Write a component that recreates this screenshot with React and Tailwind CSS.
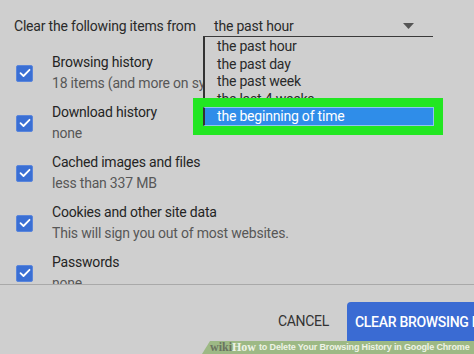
import React from 'react';

const rows = [
  { title: 'Browsing history', sub: '18 items (and more on synced devices)' },
  { title: 'Download history', sub: 'none' },
  { title: 'Cached images and files', sub: 'less than 337 MB' },
  { title: 'Cookies and other site data', sub: 'This will sign you out of most websites.' },
  { title: 'Passwords', sub: 'none' },
];

const options = ['the past hour', 'the past day', 'the past week', 'the last 4 weeks'];

function Check() {
  return (
    <div className="w-[17px] h-[17px] shrink-0 rounded-[2px] bg-[#3a6fd4] border border-[#5a86dc] flex items-center justify-center">
      <svg width="12" height="10" viewBox="0 0 12 10" fill="none">
        <path d="M1.5 5.2 L4.5 8 L10.5 1.8" stroke="white" strokeWidth="1.8" strokeLinecap="round" strokeLinejoin="round" />
      </svg>
    </div>
  );
}

export default function App() {
  return (
    <div className="relative w-[474px] h-[354px] overflow-hidden bg-[#cfcfcf] font-['Roboto',sans-serif] text-[14px] tracking-[-0.2px]">
      {/* header */}
      <div className="flex items-end pt-[17px] pl-[14px] h-[38px]">
        <span className="w-[189px] shrink-0 text-[#2a2a2a] leading-[20px] pb-[2px] whitespace-nowrap">Clear the following items from</span>
        <div className="w-[230px] border-b-2 border-[#3a3a3a] flex items-center justify-between pl-[11px] pr-[19px] h-[22px]">
          <span className="text-[#2a2a2a] leading-[20px]">the past hour</span>
          <svg width="11" height="6" viewBox="0 0 11 6"><path d="M0 0 H11 L5.5 6 Z" fill="#555" /></svg>
        </div>
      </div>

      {/* items */}
      <div className="h-[247px] overflow-hidden border-b border-[#a9a9a9] pt-[10px]">
        {rows.map((r) => (
          <div key={r.title} className="flex items-center h-[50px] pl-[16px]">
            <Check />
            <div className="ml-[19px] flex flex-col">
              <span className="text-[#242424] leading-[21px] whitespace-nowrap">{r.title}</span>
              <span className="text-[#575757] leading-[21px] whitespace-nowrap">{r.sub}</span>
            </div>
          </div>
        ))}
      </div>

      {/* footer */}
      <div className="flex items-start justify-end pt-[17px]">
        <span className="mt-[9px] text-[#333] leading-[20px] tracking-[-0.3px]">CANCEL</span>
        <div className="ml-[18px] w-[127px] h-[50px] rounded-tl-[4px] bg-[#3a6bd3] pl-[8px] pt-[10px] overflow-hidden">
          <span className="text-white font-medium leading-[20px] tracking-[-0.3px] whitespace-nowrap">CLEAR BROWSING DATA</span>
        </div>
      </div>

      {/* dropdown list */}
      <div className="absolute left-[203px] top-[37px] w-[231px] h-[70px] bg-[#cfcfcf] border-l-2 border-[#333] overflow-hidden pt-[1px]">
        {options.map((o) => (
          <div key={o} className="pl-[12px] leading-[17.5px] text-[#2a2a2a] whitespace-nowrap">{o}</div>
        ))}
      </div>

      {/* highlighted option */}
      <div className="absolute left-[193px] top-[98px] w-[250px] h-[37px] bg-[#22e622] pl-[10px] pt-[9px]">
        <div className="w-[231px] h-[19px] bg-[#2f8de9] border border-[#8fc3f0] border-l-2 border-l-[#333] flex items-center pl-[12px]">
          <span className="text-white leading-[17px] whitespace-nowrap">the beginning of time</span>
        </div>
      </div>

      {/* watermark */}
      <div className="absolute left-[202px] bottom-0 w-[272px] h-[13px] bg-[#9db985] [clip-path:polygon(8px_0,100%_0,100%_100%,0_100%)] flex items-center pl-[8px] font-['Liberation_Sans',sans-serif] text-[9px] font-bold leading-[13px] tracking-[-0.15px] whitespace-nowrap">
        <span className="text-[#6a7360] font-['Liberation_Serif',serif] text-[12px] tracking-normal">wiki</span>
        <span className="text-[#eef3e6] font-['Liberation_Serif',serif] text-[12px] tracking-normal mr-[3px]">How</span>
        <span className="text-[#eef3e6]">to Delete Your Browsing History in Google Chrome</span>
      </div>
    </div>
  );
}
